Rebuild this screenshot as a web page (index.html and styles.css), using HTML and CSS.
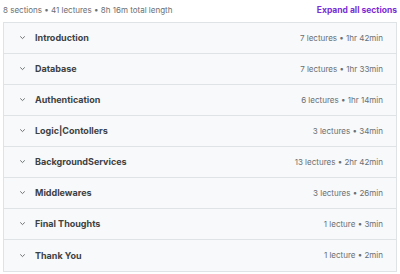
FILE: index.html
```html
<!DOCTYPE html>
<html lang="en">
<head>
  <meta charset="UTF-8" />
  <title>Course content</title>
  <link rel="stylesheet" href="styles.css">
</head>
<body>
  <div class="curriculum">
    <div class="summary">
      <span class="stats">8 sections • 41 lectures • 8h 16m total length</span>
      <button class="expand">Expand all sections</button>
    </div>

    <div class="sections">
      <div class="section">
        <span class="chev"><svg viewBox="0 0 10 10"><path d="M2.5 3.8 5 6.2 7.5 3.8"/></svg></span>
        <span class="title">Introduction</span>
        <span class="meta">7 lectures • 1hr 42min</span>
      </div>
      <div class="section">
        <span class="chev"><svg viewBox="0 0 10 10"><path d="M2.5 3.8 5 6.2 7.5 3.8"/></svg></span>
        <span class="title">Database</span>
        <span class="meta">7 lectures • 1hr 33min</span>
      </div>
      <div class="section">
        <span class="chev"><svg viewBox="0 0 10 10"><path d="M2.5 3.8 5 6.2 7.5 3.8"/></svg></span>
        <span class="title">Authentication</span>
        <span class="meta">6 lectures • 1hr 14min</span>
      </div>
      <div class="section">
        <span class="chev"><svg viewBox="0 0 10 10"><path d="M2.5 3.8 5 6.2 7.5 3.8"/></svg></span>
        <span class="title">Logic|Contollers</span>
        <span class="meta">3 lectures • 34min</span>
      </div>
      <div class="section">
        <span class="chev"><svg viewBox="0 0 10 10"><path d="M2.5 3.8 5 6.2 7.5 3.8"/></svg></span>
        <span class="title">BackgroundServices</span>
        <span class="meta">13 lectures • 2hr 42min</span>
      </div>
      <div class="section">
        <span class="chev"><svg viewBox="0 0 10 10"><path d="M2.5 3.8 5 6.2 7.5 3.8"/></svg></span>
        <span class="title">Middlewares</span>
        <span class="meta">3 lectures • 26min</span>
      </div>
      <div class="section">
        <span class="chev"><svg viewBox="0 0 10 10"><path d="M2.5 3.8 5 6.2 7.5 3.8"/></svg></span>
        <span class="title">Final Thoughts</span>
        <span class="meta">1 lecture • 3min</span>
      </div>
      <div class="section">
        <span class="chev"><svg viewBox="0 0 10 10"><path d="M2.5 3.8 5 6.2 7.5 3.8"/></svg></span>
        <span class="title">Thank You</span>
        <span class="meta">1 lecture • 2min</span>
      </div>
    </div>
  </div>
</body>
</html>
```

FILE: styles.css
```css
* {
  box-sizing: border-box;
}

body {
  margin: 0;
  font-family: Inter, "Noto Sans", Arial, sans-serif;
  background-color: #ffffff;
  color: #2d2f31;
}

.curriculum {
  padding: 0 3px;
}

.summary {
  display: flex;
  justify-content: space-between;
  align-items: center;
  height: 22px;
  padding-bottom: 3px;
}

.stats {
  font-size: 8px;
  color: #6a6f73;
}

.expand {
  border: none;
  background: none;
  padding: 0;
  font-family: inherit;
  font-size: 8.5px;
  font-weight: 700;
  color: #7a2ed6;
  cursor: pointer;
}

.sections {
  border: 1px solid #dfe3e6;
}

.section {
  display: flex;
  align-items: center;
  height: 31px;
  padding: 0 13px 1px 14px;
  background-color: #f7f9fa;
  border-bottom: 1px solid #dfe3e6;
}

.section:last-child {
  border-bottom: none;
}

.chev {
  display: flex;
  width: 9px;
  height: 9px;
  margin-right: 8px;
}

.chev svg {
  width: 9px;
  height: 9px;
  fill: none;
  stroke: #6a6f73;
  stroke-width: 1.1;
}

.title {
  flex: 1;
  font-size: 9px;
  font-weight: 700;
  color: #3e4143;
}

.meta {
  font-size: 8px;
  color: #6a6f73;
}
```
